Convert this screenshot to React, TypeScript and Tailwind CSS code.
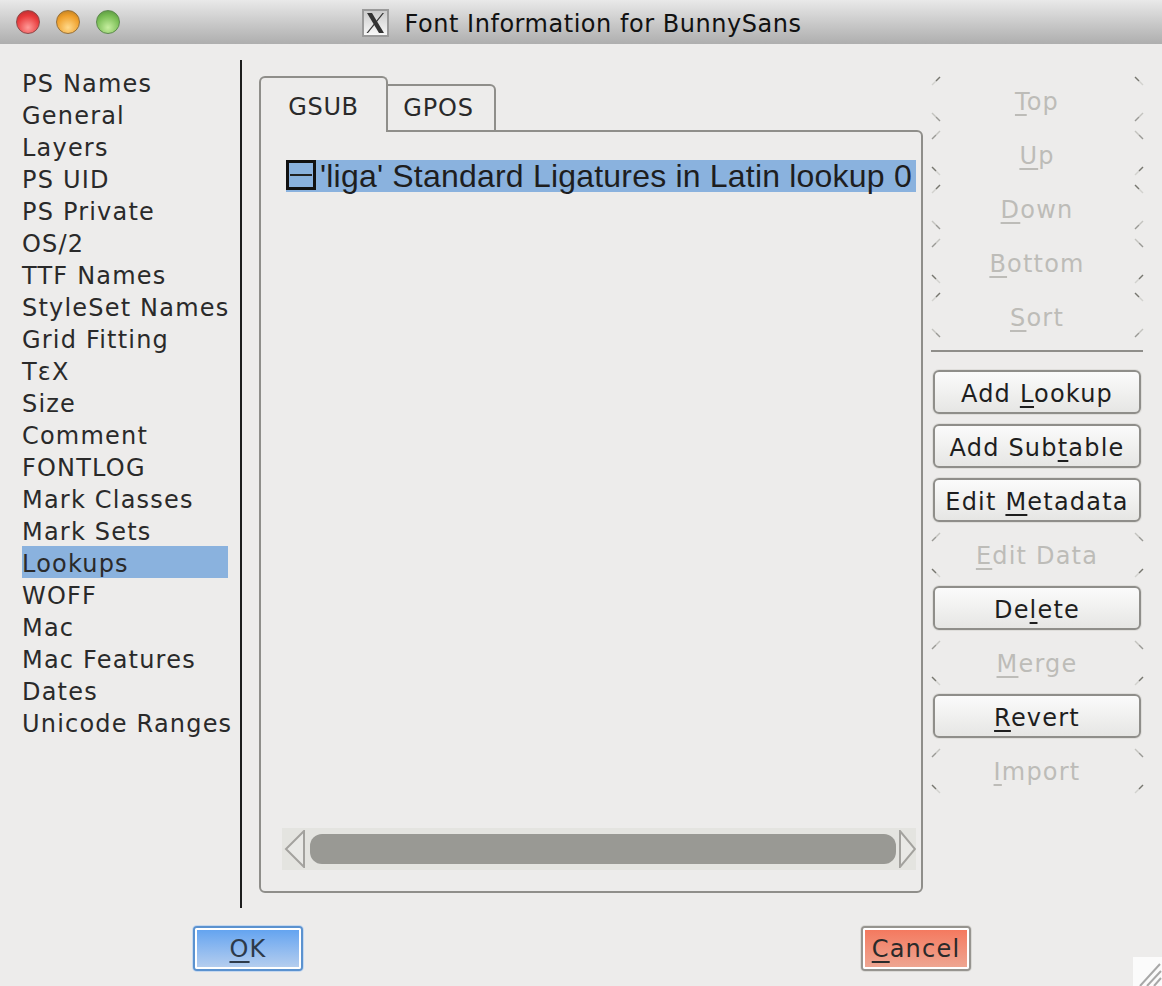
const SECTIONS = [
  "PS Names", "General", "Layers", "PS UID", "PS Private", "OS/2", "TTF Names", "StyleSet Names",
  "Grid Fitting", "TεX", "Size", "Comment", "FONTLOG", "Mark Classes", "Mark Sets", "Lookups",
  "WOFF", "Mac", "Mac Features", "Dates", "Unicode Ranges",
];

// mnemonic underline, FontForge style
function Mn({ children }: { children: string }) {
  return <span className="underline decoration-2 underline-offset-[4px]">{children}</span>;
}

function Label({ pre = "", mn, post = "" }: { pre?: string; mn: string; post?: string }) {
  return (
    <span className="whitespace-pre">
      {pre}
      <Mn>{mn}</Mn>
      {post}
    </span>
  );
}

function Tick({ flip, dark, className }: { flip?: boolean; dark: boolean; className: string }) {
  const a = dark ? "#77766f" : "#c4c3bf";
  const b = dark ? "#d2d1ce" : "#9a9995";
  return (
    <svg width="10" height="10" viewBox="0 0 10 10" className={`absolute ${className}`}>
      <g transform={flip ? "translate(10 0) scale(-1 1)" : undefined}>
        <path d="M1 9L5 5" stroke={b} strokeWidth="1.4" />
        <path d="M5 5L9 1" stroke={a} strokeWidth="1.4" />
      </g>
    </svg>
  );
}

function DisabledButton({ pre, mn, post, topDark, low }: { pre?: string; mn: string; post?: string; topDark: boolean; low?: boolean }) {
  return (
    <div className={`relative h-[44px] flex items-center justify-center text-[#bdbcb8] ${low ? "pt-[8px]" : "pt-[4px]"}`}>
      <Tick dark={topDark} className="left-[-2px] top-[0px]" />
      <Tick dark={topDark} flip className="right-[-3px] top-[0px]" />
      <Tick dark={!topDark} flip className="left-[-2px] bottom-[-2px]" />
      <Tick dark={!topDark} className="right-[-3px] bottom-[-2px]" />
      <Label pre={pre} mn={mn} post={post} />
    </div>
  );
}

function ActionButton({ pre, mn, post }: { pre?: string; mn: string; post?: string }) {
  return (
    <div className="h-[44px] pt-[4px] flex items-center justify-center rounded-[6px] border-2 border-[#8f8e8a] bg-gradient-to-b from-[#fbfbfb] to-[#e6e6e4] shadow-[0_0_0_1px_#dfdedb] text-[#1e1e1e]">
      <Label pre={pre} mn={mn} post={post} />
    </div>
  );
}

export default function App() {
  return (
    <div className="relative w-[1162px] h-[986px] overflow-hidden bg-[#edeceb] font-['DejaVu_Sans',sans-serif] text-[24px] tracking-[1.2px] text-[#2a2a2a]">
      {/* Title bar */}
      <div className="relative h-[44px] flex items-center justify-center bg-gradient-to-b from-[#e9e9e9] to-[#aeaeae]">
        <div className="absolute left-[16px] top-[10px] flex gap-[16px]">
          <div className="w-[24px] h-[24px] rounded-full border border-[#8c4a4a] bg-[radial-gradient(circle_at_50%_75%,#ff9a98,#e8393a_60%,#a92a2c)]" />
          <div className="w-[24px] h-[24px] rounded-full border border-[#96703a] bg-[radial-gradient(circle_at_50%_75%,#ffd98a,#ef9f2a_60%,#b0761f)]" />
          <div className="w-[24px] h-[24px] rounded-full border border-[#5d8a4e] bg-[radial-gradient(circle_at_50%_75%,#c6ee9f,#79bd54_60%,#4f8a3a)]" />
        </div>
        <div className="flex items-center gap-[16px] pl-[1px] tracking-[0.53px] text-[#111]">
          <svg width="27" height="28" viewBox="0 0 27 28" className="mt-[2px]">
            <defs>
              <linearGradient id="xbg" x1="0" y1="0" x2="0" y2="1">
                <stop offset="0" stopColor="#c9c9c9" />
                <stop offset="1" stopColor="#fafafa" />
              </linearGradient>
            </defs>
            <rect x="1" y="1" width="25" height="26" fill="url(#xbg)" stroke="#9a9a9a" strokeWidth="2" />
            <path d="M5 4H10L22 24H17Z" fill="#333" />
            <path d="M20.5 4H22L6 24H4.5Z" fill="#333" />
          </svg>
          <span className="pt-[3px]">Font Information for BunnySans</span>
        </div>
      </div>

      {/* Body */}
      <div className="flex h-[864px]">
        <div className="w-[240px] pt-[22px] pl-[22px]">
          {SECTIONS.map((name) => (
            <div
              key={name}
              className={`h-[32px] w-[206px] leading-[36px] whitespace-nowrap ${name === "Lookups" ? "bg-[#8ab2de]" : ""}`}
            >
              {name}
            </div>
          ))}
        </div>
        <div className="w-[2px] mt-[16px] bg-[#1d1d1d]" />

        <div className="w-[664px] ml-[17px] pt-[32px] flex flex-col h-[849px]">
          {/* Tabs */}
          <div className="flex items-end h-[56px] relative z-10 -mb-[2px]">
            <div className="w-[129px] h-[56px] flex items-center justify-center pt-[4px] tracking-[0.6px] rounded-t-[6px] border-2 border-b-0 border-[#8f8e8a] bg-[#edeceb]">
              GSUB
            </div>
            <div className="w-[109px] h-[48px] -ml-[1px] flex items-center justify-center pr-[4px] tracking-[0.8px] rounded-tr-[6px] border-2 border-l-0 border-[#8f8e8a]">
              GPOS
            </div>
          </div>
          {/* Panel */}
          <div className="flex-1 flex flex-col rounded-b-[6px] rounded-tr-[6px] border-2 border-[#8f8e8a] pl-[25px] pr-[5px] pt-[28px] pb-[21px]">
            <div className="h-[32px] flex bg-[#8ab2de] pl-[1px] text-[#1e1e1e] font-['Liberation_Sans',sans-serif] text-[32px] tracking-[0.2px] leading-[32px]">
              <div className="w-[30px] h-[30px] shrink-0 flex items-center justify-center border-[3px] border-[#111] -ml-[1px]">
                <div className="w-[22px] h-[2px] bg-[#222]" />
              </div>
              <span className="whitespace-nowrap pl-[4px]">'liga' Standard Ligatures in Latin lookup 0</span>
            </div>
            <div className="flex-1" />
            {/* Scrollbar */}
            <div className="h-[42px] -ml-[4px] flex items-center bg-[#e4e4e0]">
              <svg width="26" height="38" viewBox="0 0 26 38" className="shrink-0">
                <path d="M22 1V37L4 19Z" fill="#e9e9e6" stroke="#a3a29e" strokeWidth="2" />
              </svg>
              <div className="w-[586px] h-[30px] ml-[2px] shrink-0 rounded-[12px] bg-[#999994]" />
              <svg width="18" height="38" viewBox="0 0 18 38" className="shrink-0 ml-[2px]">
                <path d="M2 1V37L17 19Z" fill="#e9e9e6" stroke="#a3a29e" strokeWidth="2" />
              </svg>
            </div>
          </div>
        </div>

        {/* Button column */}
        <div className="w-[208px] ml-[10px] pt-[32px] flex flex-col gap-[10px]">
          <DisabledButton mn="T" post="op" topDark low />
          <DisabledButton mn="U" post="p" topDark={false} low />
          <DisabledButton mn="D" post="own" topDark low />
          <DisabledButton mn="B" post="ottom" topDark={false} low />
          <DisabledButton mn="S" post="ort" topDark low />
          <div className="h-[2px] -mx-[2px] mt-[4px] mb-[8px] bg-[#8f8e8a]" />
          <ActionButton pre="Add " mn="L" post="ookup" />
          <ActionButton pre="Add Sub" mn="t" post="able" />
          <ActionButton pre="Edit " mn="M" post="etadata" />
          <DisabledButton mn="E" post="dit Data" topDark={false} />
          <ActionButton pre="De" mn="l" post="ete" />
          <DisabledButton mn="M" post="erge" topDark={false} />
          <ActionButton mn="R" post="evert" />
          <DisabledButton mn="I" post="mport" topDark={false} />
        </div>
      </div>

      {/* Footer */}
      <div className="flex pt-[20px] pl-[195px]">
        <div className="w-[106px] h-[41px] flex items-center justify-center rounded-[2px] border-2 border-white bg-gradient-to-b from-[#64a4f0] to-[#b4cdee] shadow-[0_0_0_2px_#5b92cf,0_0_0_3px_#c5d8ef] text-[#2d3a4a]">
          <Label mn="O" post="K" />
        </div>
        <div className="w-[106px] h-[41px] ml-[562px] flex items-center justify-center rounded-[2px] border-2 border-white bg-gradient-to-b from-[#f4795f] to-[#eea591] shadow-[0_0_0_2px_#96948f,0_0_0_3px_#dad9d6] text-[#2a2a2a]">
          <Label mn="C" post="ancel" />
        </div>
      </div>

      {/* Resize grip */}
      <svg width="29" height="29" viewBox="0 0 29 29" className="absolute right-0 bottom-0">
        <path d="M0 29V0H29V29Z" fill="#fbfbfb" />
        <path d="M7 29L27 7M14 29L28 14M21 29L28 21" stroke="#a8a8a8" strokeWidth="2" />
      </svg>
    </div>
  );
}
